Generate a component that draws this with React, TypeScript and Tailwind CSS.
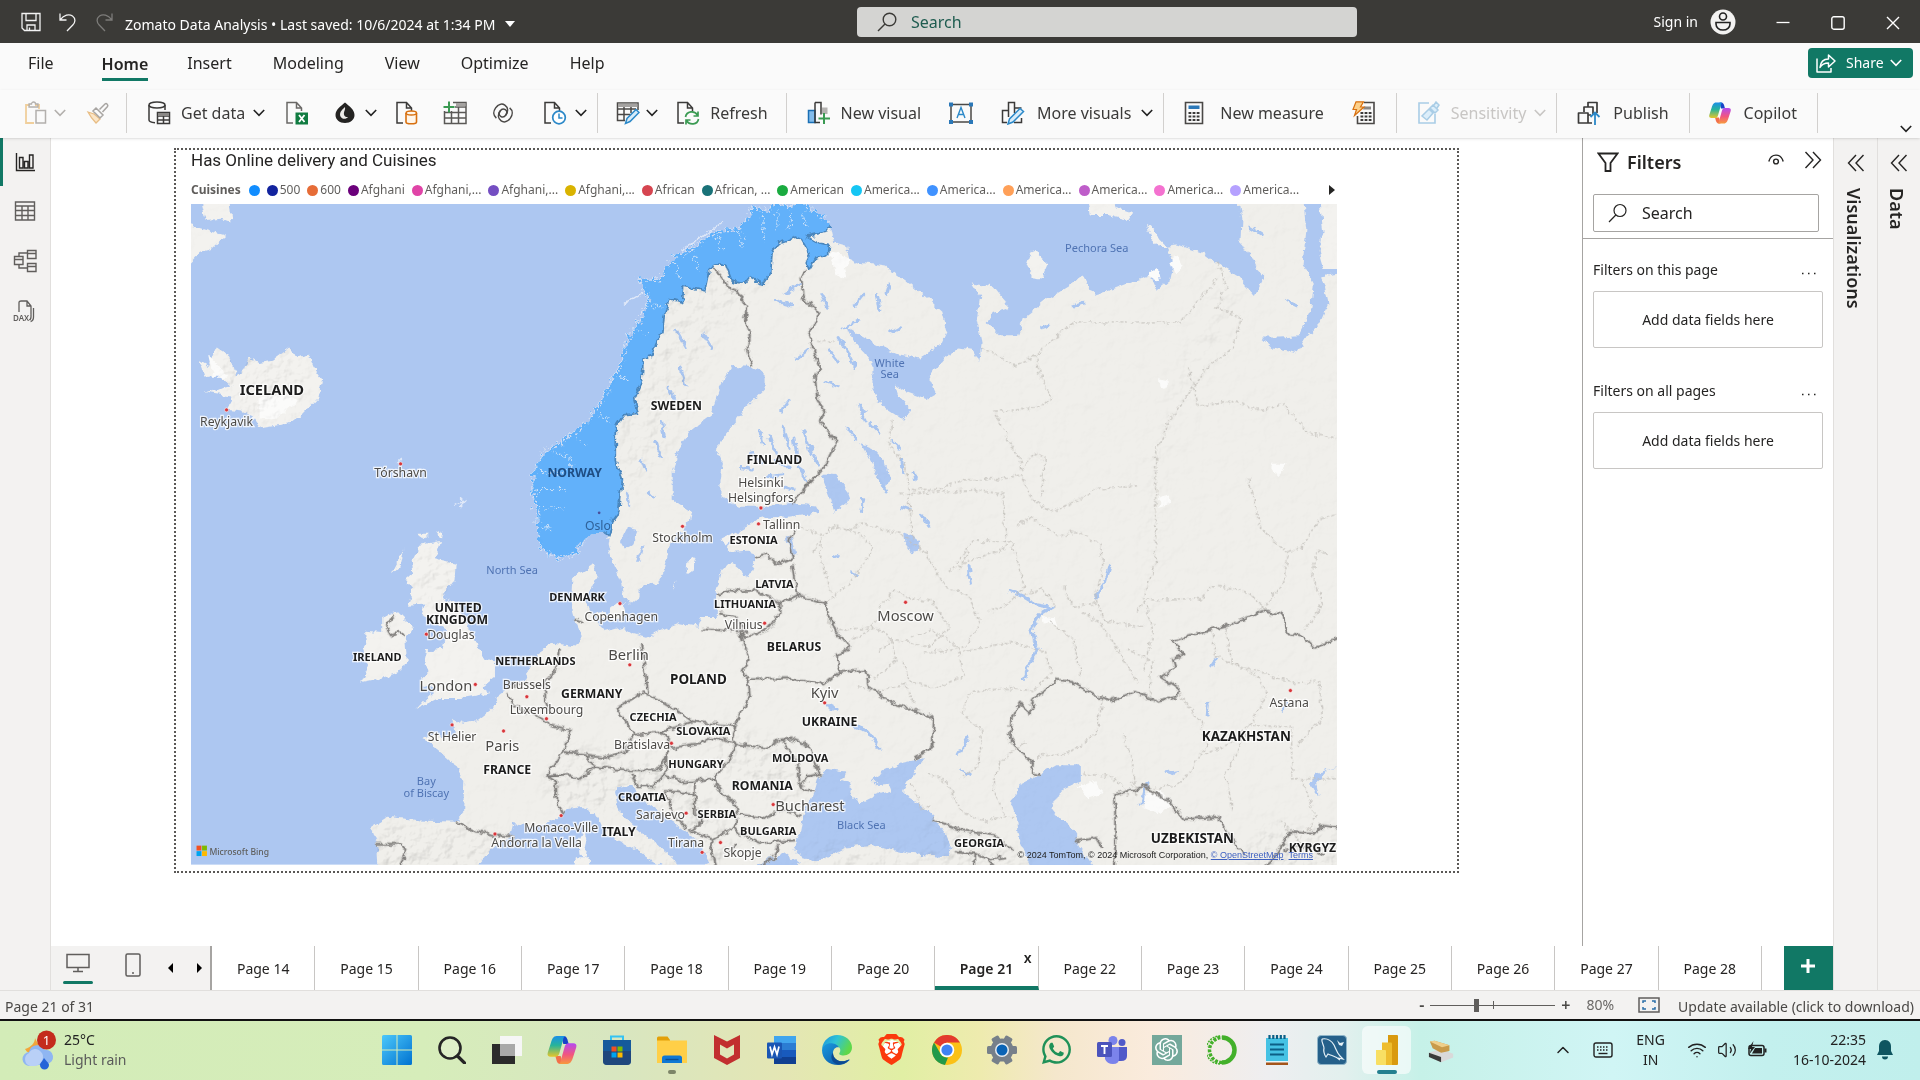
import React from "react";
import { ChevronUp, Wifi, Volume2 } from "lucide-react";
import { SiBrave, SiOpenai } from "react-icons/si";
import { FaWhatsapp } from "react-icons/fa";

type IconProps = { children: React.ReactNode; className?: string; box?: string };

function Ic({ children, className = "h-6 w-6", box = "0 0 24 24" }: IconProps) {
  return (
    <svg viewBox={box} fill="none" className={"shrink-0 " + className} aria-hidden="true">
      {children}
    </svg>
  );
}

function Chev({ className = "" }: { className?: string }) {
  return (
    <svg viewBox="0 0 12 12" fill="none" stroke="currentColor" strokeWidth="1.6" className={"h-3 w-3 shrink-0 " + className} aria-hidden="true">
      <path d="M.8 3l5.2 5.4L11.2 3" />
    </svg>
  );
}

function CopilotMark({ className, id }: { className: string; id: string }) {
  return (
    <svg viewBox="0 0 24 24" className={"shrink-0 " + className} aria-hidden="true">
      <defs>
        <linearGradient id={id + "a"} x1="0" y1="0" x2="0" y2="1">
          <stop offset="0" stopColor="#1b8fe8" />
          <stop offset=".45" stopColor="#27b49a" />
          <stop offset="1" stopColor="#e6c62a" />
        </linearGradient>
        <linearGradient id={id + "b"} x1="0" y1="1" x2="0" y2="0">
          <stop offset="0" stopColor="#f79a3c" />
          <stop offset=".45" stopColor="#f2567e" />
          <stop offset="1" stopColor="#b54af0" />
        </linearGradient>
      </defs>
      <path d="M17 7.5L16 4c-.5-1.6-1.3-2.5-3-2.5h-1.5L13 7.5z" fill="#1843c8" />
      <path d="M7 16.5L8 20c.5 1.600 1.300 2.500 3 2.500h1.500L11 16.500z" fill="#f2704a" />
      <path d="M14 1.500H8C5.500 1.500 4.500 4 3.700 6.500L1.300 14c-.6 2 .5 3 2.200 3H7c1.700 0 2.500-1 3-2.600l2.600-9.100c.5-1.900.6-3.800 2.400-3.800z" fill={`url(#${id}a)`} />
      <path d="M10 22.500h6c2.500 0 3.500-2.500 4.300-5l2.400-7.500c.6-2-.5-3-2.200-3H17c-1.700 0-2.500 1-3 2.600l-2.600 9.100c-.5 1.900-.6 3.800-2.400 3.800z" fill={`url(#${id}b)`} />
    </svg>
  );
}

function TitleBar() {
  return (
    <header className="grid h-[43px] grid-cols-[857fr_500fr_563fr] items-center bg-[#3b3a37] text-sm text-white">
      <div className="flex items-center pl-[21px]">
        <button aria-label="Save" className="block">
          <Ic className="h-5 w-5" box="0 0 20 20">
            <path d="M1 1.500h18v17H3.500L1 16zM5 1.500v7h10v-7M6 18.500v-5.500h8v5.500M8.500 15.500v3" stroke="#f3f3f3" strokeWidth="1.300" />
          </Ic>
        </button>
        <button aria-label="Undo" className="ml-[17px]">
          <Ic className="h-5 w-5" box="0 0 20 20">
            <path d="M2 1.500v6.500h6.500M2.300 7.700C6 3 11 1.500 14.500 4c3.500 2.600 2.800 6.500.3 9L9 19" stroke="#f3f3f3" strokeWidth="1.300" />
          </Ic>
        </button>
        <button aria-label="Redo" className="ml-[17px]">
          <Ic className="h-5 w-5" box="0 0 20 20">
            <path d="M17 1.500v6.500h-6.500M16.700 7.700C13 3 8 1.500 4.500 4 1 6.600 1.700 10.500 4.200 13L10 19" stroke="#7d7c7a" strokeWidth="1.300" />
          </Ic>
        </button>
        <button className="ml-2.5 flex items-center gap-2.5 pt-1.5 whitespace-nowrap">
          <span>Zomato Data Analysis • Last saved: 10/6/2024 at 1:34 PM</span>
          <svg viewBox="0 0 10 6" className="mb-0.5 h-1.5 w-2.5" fill="#fff" aria-hidden="true"><path d="M0 0h10L5 6z" /></svg>
        </button>
      </div>
      <label className="flex h-[30px] items-center rounded-sm bg-[#d4d4d2]">
        <Ic className="ml-5 h-5 w-5" box="0 0 20 20">
          <circle cx="12.500" cy="7.500" r="6.300" stroke="#3b3a37" strokeWidth="1.400" />
          <path d="M8 12l-7 7" stroke="#3b3a37" strokeWidth="1.400" />
        </Ic>
        <input aria-label="Search" placeholder="Search" className="ml-3.5 w-full bg-transparent text-base text-[#1f5c50] outline-none placeholder:text-[#1f5c50]" />
      </label>
      <div className="flex items-center justify-end">
        <button className="flex items-center gap-3">
          Sign in
          <Ic className="h-[26px] w-[26px]" box="0 0 26 26">
            <circle cx="13" cy="13" r="12.500" fill="#f3f2f1" />
            <circle cx="13" cy="7.500" r="3.500" stroke="#222" strokeWidth="1.600" />
            <path d="M6 13.500h14v1.500c0 3.500-3 6-7 6s-7-2.500-7-6z" stroke="#222" strokeWidth="1.600" />
          </Ic>
        </button>
        <button aria-label="Minimize" className="ml-10"><Ic className="h-3.5 w-3.5" box="0 0 14 14"><path d="M.5 7.500h13" stroke="#fff" strokeWidth="1.300" /></Ic></button>
        <button aria-label="Maximize" className="ml-[41px]"><Ic className="mt-0.5 h-3.5 w-3.5" box="0 0 14 14"><rect x=".8" y=".8" width="12.400" height="12.400" rx="2" stroke="#fff" strokeWidth="1.400" /></Ic></button>
        <button aria-label="Close" className="mr-5 ml-[41px]"><Ic className="mt-0.5 h-3.5 w-3.5" box="0 0 14 14"><path d="M1 1l12 12M13 1L1 13" stroke="#fff" strokeWidth="1.400" /></Ic></button>
      </div>
    </header>
  );
}

function MenuBar() {
  const tabs = ["Insert", "Modeling", "View", "Optimize", "Help"];
  return (
    <nav className="flex h-[47px] items-center bg-[#fafafa] pl-7 text-base text-[#252423]">
      <button className="mr-12 pb-2">File</button>
      <button className="border-b-3 border-[#117865] pb-0.5 font-semibold">Home</button>
      <div className="ml-[39px] flex gap-[41px] pb-2">
        {tabs.map((t) => (
          <button key={t}>{t}</button>
        ))}
      </div>
      <button className="mt-[5px] mr-[7px] ml-auto flex h-[30px] w-[105px] items-center self-start rounded bg-[#117865] pl-2 text-sm text-white">
        <Ic className="h-5 w-5" box="0 0 20 20">
          <path d="M1 5.500V19h14v-4M12.500 2v4C7.500 6 4.500 9 4 14.500c2-3.500 4.500-4.500 8.500-4.500v4L19 8z" stroke="#fff" strokeWidth="1.500" strokeLinejoin="round" />
        </Ic>
        <span className="ml-2.5">Share</span>
        <Chev className="ml-1.5" />
      </button>
    </nav>
  );
}

const doc = "M8 22H2V1.500h9.500L16.500 7v3M11.500 1.500V7h5";

function Group({ children, className }: { children: React.ReactNode; className: string }) {
  return <div className={"flex h-10 items-center border-r border-[#d2d0ce] " + className}>{children}</div>;
}

function Ribbon() {
  return (
    <div className="relative z-10 flex h-12 items-center bg-[#fafafa] pb-0.5 text-base whitespace-nowrap text-[#3b3a39] shadow-sm">
      <Group className="pr-4 pl-6">
        <button aria-label="Paste" className="flex items-center text-[#b3b0ad]">
          <Ic>
            <path d="M6 4H2v18h8M15 8V4h-4" stroke="#f0cf9c" strokeWidth="1.800" />
            <path d="M5 6V3h2.500a2 2 0 014 0H14v3z" stroke="#b3b0ad" strokeWidth="1.300" />
            <path d="M12 9.500h9.500V22H12z" stroke="#b3b0ad" strokeWidth="1.500" />
          </Ic>
          <Chev className="ml-1.5" />
        </button>
        <button aria-label="Format painter" className="ml-5">
          <Ic>
            <path d="M2 11l6 2 6 5-4 4C7 19 4 15 2 11z" fill="#fbe6c8" stroke="#e8bd84" strokeWidth="1.300" />
            <path d="M10 7l7 7-3 3L7 10zM13.500 8.500L19 3c1.500-1.200 3.500.8 2.500 2.500L16.500 11" stroke="#a8a5a2" strokeWidth="1.500" />
          </Ic>
        </button>
      </Group>
      <Group className="pr-2.5 pl-5">
        <button className="flex items-center">
          <Ic>
            <ellipse cx="10" cy="4" rx="8" ry="3" stroke="#3b3a39" strokeWidth="1.500" />
            <path d="M2 4v15c0 1.500 3 2.500 6 2.800M18 4v5" stroke="#3b3a39" strokeWidth="1.500" />
            <path d="M10.500 11.500h12v11h-12zM10.500 15h12M10.500 19h12M16.500 15v7.500" stroke="#3b3a39" strokeWidth="1.500" />
            <path d="M11 12h11v3H11z" fill="#8a8886" />
          </Ic>
          <span className="ml-2.5">Get data</span>
          <Chev className="ml-2 text-[#222]" />
        </button>
        <button aria-label="Excel workbook" className="ml-5">
          <Ic>
            <path d={doc} stroke="#6a6866" strokeWidth="1.500" />
            <path d="M10.500 11.500h12.500v12H10.500z" fill="#107c41" />
            <path d="M14 14l5.500 7M19.500 14L14 21" stroke="#fff" strokeWidth="1.800" />
          </Ic>
        </button>
        <button aria-label="OneLake data hub" className="ml-6 flex items-center">
          <Ic>
            <path d="M12 1.500c4 3.500 9.500 7 9.500 12.500 0 4.500-4 8-9.500 8s-9.500-3.500-9.500-8C2.500 8.500 8 5 12 1.500z" fill="#242322" />
            <path d="M12 6c-3.500 3-6 6-4.500 9.500 2 3.500 6 2.500 7.500.5-3 .5-4.500-2-4-4.500.3-2 1.500-3 1-5.500z" fill="#eceae8" />
          </Ic>
          <Chev className="ml-2 text-[#222]" />
        </button>
        <button aria-label="SQL Server" className="ml-4.5">
          <Ic>
            <path d={doc} stroke="#3b3a39" strokeWidth="1.500" />
            <path d="M11 12v9c0 2.400 10.500 2.400 10.500 0v-9" fill="#fff6ea" stroke="#d8700f" strokeWidth="1.600" />
            <ellipse cx="16.300" cy="12" rx="5.200" ry="2" fill="#fff6ea" stroke="#d8700f" strokeWidth="1.500" />
          </Ic>
        </button>
        <button aria-label="Enter data" className="ml-6">
          <Ic>
            <path d="M10 1.500h13v21H1.500V10M1.500 11.500H23M1.500 17H23M8.500 10v12.500M15.500 6v16.500M12 6h11" stroke="#5a5856" strokeWidth="1.500" />
            <path d="M13 2h9.500v3.500H13z" fill="#a5a3a1" />
            <path d="M6 .5v11M.5 6h11" stroke="#3a9a52" strokeWidth="2" />
          </Ic>
        </button>
        <button aria-label="Dataverse" className="ml-6">
          <Ic>
            <g transform="rotate(35 12 12)" stroke="#4a4846" strokeWidth="1.500">
              <path d="M12 8c2.500 0 3.500 1.800 3.500 4s-1 4-3.500 4-3.500-1.800-3.500-4 1-4 3.500-4z" />
              <path d="M8.500 12c0 5 3 7.500 6.500 7.500s6-3 6-7.500-2.500-7.800-6.500-8M15.500 12c0-5-3-7.500-6.500-7.500S3 7.500 3 12s2.500 7.800 6.500 8" />
            </g>
          </Ic>
        </button>
        <button aria-label="Recent sources" className="ml-7 flex items-center">
          <Ic>
            <path d={doc} stroke="#3b3a39" strokeWidth="1.500" />
            <circle cx="16" cy="16.500" r="6.300" fill="#fff" stroke="#2b88c8" strokeWidth="1.700" />
            <path d="M16 12.500v4.500h3.500" stroke="#2b88c8" strokeWidth="1.500" />
          </Ic>
          <Chev className="ml-2 text-[#222]" />
        </button>
      </Group>
      <Group className="pr-4.5 pl-4.5">
        <button aria-label="Transform data" className="flex items-center">
          <Ic>
            <path d="M9 19.500H1.500V2H22v7M1.500 8H20M1.500 13.500h13M8 6v13M15 6v6" stroke="#4a4846" strokeWidth="1.500" />
            <path d="M2 2.500h19.500V6H2z" fill="#a5a3a1" />
            <path d="M9.500 22.500l1.500-5L20 8.500l3 3-9 9z" fill="#d8ecfa" stroke="#2b88c8" strokeWidth="1.500" />
          </Ic>
          <Chev className="ml-1.5 text-[#222]" />
        </button>
        <button className="ml-4.5 flex items-center">
          <Ic>
            <path d={doc} stroke="#3b3a39" strokeWidth="1.500" />
            <path d="M9.500 16c1-6 9-7 12-2M22 10.500V15h-4.500M22.500 18c-1 6-9 6.500-12 1.500M10 23.500V19h4.500" stroke="#3a9a52" strokeWidth="1.700" />
          </Ic>
          <span className="ml-2.5">Refresh</span>
        </button>
      </Group>
      <Group className="pr-2.5 pl-5">
        <button className="flex items-center">
          <Ic>
            <path d="M1.500 9.500H8v12H1.500z" fill="#83bdec" stroke="#1a6fb5" strokeWidth="1.500" />
            <path d="M15 6.500h5.500V13H15z" fill="#b5b3b1" />
            <path d="M8 1.500h6v12M8 1.500v20h5" stroke="#3b3a39" strokeWidth="1.500" />
            <path d="M17 12v11M11.500 17.500h11.500" stroke="#3a9a52" strokeWidth="2" />
          </Ic>
          <span className="ml-2.5">New visual</span>
        </button>
        <button aria-label="Text box" className="ml-7">
          <Ic>
            <path d="M2 3.500h20v17.500H2z" stroke="#4a4846" strokeWidth="1.500" />
            <path d="M8 17l4-10.500L16 17M9.500 13.500h5" stroke="#2b88c8" strokeWidth="1.400" />
            <path d="M0 1.500h4v4H0zM20 1.500h4v4h-4zM0 19h4v4H0zM20 19h4v4h-4z" fill="#2b78b8" />
          </Ic>
        </button>
        <button className="ml-7 flex items-center">
          <Ic>
            <path d="M6 21.500H1.500V9.500h6M7.500 16V1.500h6V12M14 7h6.500M20.500 17v4.500H13" stroke="#3b3a39" strokeWidth="1.500" />
            <path d="M7 23l1.500-5L19 7.500l3.500 3L12 21z" fill="#d8ecfa" stroke="#2b88c8" strokeWidth="1.500" />
          </Ic>
          <span className="ml-3">More visuals</span>
          <Chev className="ml-2.5 text-[#222]" />
        </button>
      </Group>
      <Group className="pr-5 pl-4.5">
        <button className="flex items-center">
          <Ic>
            <path d="M3.500 1.500h17v21h-17z" stroke="#4a4846" strokeWidth="1.600" />
            <path d="M6.500 4.500h11V8h-11z" fill="#2b78b8" />
            <path d="M6.500 12h11M6.500 15.500h11M6.500 19h11" stroke="#3b3a39" strokeWidth="2.200" strokeDasharray="2.800 1.300" />
          </Ic>
          <span className="ml-3.5">New measure</span>
        </button>
        <button aria-label="Quick measure" className="ml-7">
          <Ic>
            <path d="M12 1.500h10v21H5.500V15" stroke="#4a4846" strokeWidth="1.600" />
            <path d="M12 5.500h7v3h-8z" fill="#8a8886" />
            <path d="M8.500 12h11M8.500 15.500h11M8.500 19h11" stroke="#3b3a39" strokeWidth="2.200" strokeDasharray="2.800 1.300" />
            <path d="M4 .8h7.500L8.500 6H12L2.500 14.500l2-6H1z" fill="#fcd08a" stroke="#d8700f" strokeWidth="1.200" />
          </Ic>
        </button>
      </Group>
      <Group className="pr-2.5 pl-5">
        <button disabled className="flex items-center text-[#c8c6c4]">
          <Ic>
            <path d="M12 2H2v20h16v-9" stroke="#a9cde6" strokeWidth="1.600" />
            <path d="M12 8l4 4-6 7-5-4zM13 7l3-3 5 5-3 3zM17 4l2-3 3 3-2 3" fill="#dceefa" stroke="#a9cde6" strokeWidth="1.500" />
          </Ic>
          <span className="ml-2.5">Sensitivity</span>
          <Chev className="ml-2" />
        </button>
      </Group>
      <Group className="px-5">
        <button className="flex items-center">
          <Ic>
            <path d="M7 11V6h9v7M11 6V1.500h9V12M1.500 12H11v10H1.500zM11 22h4M11 14h3" stroke="#3b3a39" strokeWidth="1.700" strokeLinejoin="round" />
            <path d="M18 24V12M13.500 16L18 11.500l4.500 4.500" stroke="#2b88c8" strokeWidth="1.800" />
          </Ic>
          <span className="ml-3">Publish</span>
        </button>
      </Group>
      <Group className="pr-5 pl-4.5">
        <button className="flex items-center">
          <CopilotMark className="h-6 w-6" id="ribbonCopilot" />
          <span className="ml-3">Copilot</span>
        </button>
      </Group>
      <button aria-label="Collapse ribbon" className="mt-8 mr-2 ml-auto text-[#222]"><Chev /></button>
    </div>
  );
}

function Rail() {
  return (
    <aside className="flex w-[51px] shrink-0 flex-col items-center border-r border-[#e1dfdd] bg-[#f3f2f1]">
      <button aria-label="Report view" className="flex h-12 w-full items-center border-l-3 border-[#117865] pl-3">
        <Ic className="h-5 w-5" box="0 0 20 20">
          <path d="M1.500 1v17.500H20M4.500 16V5.500H8V16zM9.500 16V9.500H13V16zM14.500 16V3H18v13z" stroke="#252423" strokeWidth="1.400" />
        </Ic>
      </button>
      <button aria-label="Table view" className="flex h-[50px] items-center">
        <Ic className="h-[22px] w-[22px]" box="0 0 22 22">
          <path d="M1.500 2h19v18h-19zM1.500 6h19M1.500 10.500h19M1.500 15.500h19M8 6v14M14 6v14" stroke="#605e5c" strokeWidth="1.400" />
        </Ic>
      </button>
      <button aria-label="Model view" className="flex h-[50px] items-center">
        <Ic>
          <path d="M14.500 1.500h8.500v8h-8.500zM14.500 4.500H23M14.500 14.500h8.500v8h-8.500zM14.500 17.500H23M1.500 7.500H10v8H1.500zM1.500 10.500H10M6 7.500V4h8.500M6 15.500V19h8.500" stroke="#605e5c" strokeWidth="1.400" />
        </Ic>
      </button>
      <button aria-label="DAX query view" className="flex h-[50px] items-center">
        <Ic>
          <path d="M6 13V3.500C6 2.500 7 2 8 2h6l4 5v11c0 2-1 3-2.500 3M14 2v5h4M20.500 9v9c0 2-1 4-3 4.500" stroke="#605e5c" strokeWidth="1.300" />
          <text x="0" y="22" fontSize="8" fontWeight="600" fill="#605e5c" stroke="#f3f2f1" strokeWidth="1.500" paintOrder="stroke" fontFamily="Noto Sans">DAX</text>
        </Ic>
      </button>
    </aside>
  );
}

const legend: [string, string][] = [
  ["#118dff", ""],
  ["#12239e", "500"],
  ["#e66c37", "600"],
  ["#6b007b", "Afghani"],
  ["#e044a7", "Afghani,..."],
  ["#744ec2", "Afghani,..."],
  ["#d9b300", "Afghani,..."],
  ["#d64550", "African"],
  ["#197278", "African, ..."],
  ["#1aab40", "American"],
  ["#15c6f4", "America..."],
  ["#4092ff", "America..."],
  ["#ffa058", "America..."],
  ["#be5dc9", "America..."],
  ["#f472d0", "America..."],
  ["#b5a1ff", "America..."],
];

const norwayCoast =
  "476,441 467,452 458,454 445,449 441,438 440,419 437,403 437,389 443,373 460,362 481,346 495,324 509,297 515,275 528,258 531,242 524,230 539,231 548,215 571,201 588,190 602,190 610,182 615,172 628,175 634,168 645,172 652,166 663,174 677,185";
const norwayBorder =
  "677,185 674,190 659,193 669,199 677,201 676,208 666,211 660,221 658,215 661,208 654,196 649,194 635,199 630,207 629,223 622,233 612,227 608,232 597,230 592,216 583,216 579,223 576,238 558,234 557,248 546,245 542,258 541,272 536,278 533,291 525,293 524,310 518,325 521,338 509,339 503,348 503,378 508,392 506,404 505,418 500,425 497,438 491,433";

const mainland =
  norwayCoast +
  " 680,198 691,201 694,212 702,215 723,218 741,231 758,245 769,255 773,270 767,283 751,293 730,289 712,280 691,268 698,280 712,297 712,318 720,332 737,343 744,335 733,324 730,314 741,321 755,326 764,321 758,308 769,294 783,284 794,286 799,297 801,280 797,261 800,242 793,231 810,234 820,246 822,252 810,256 806,264 815,274 831,274 836,259 854,245 872,234 884,226 893,241 907,237 928,229 939,226 944,238 955,229 958,215 951,201 960,200 982,207 992,215 1010,226 1024,242 1032,226 1026,220 1020,207 1012,203 1013,180 1010,160 1063,160 1066,188 1063,215 1072,231 1070,253 1059,275 1045,276 1029,276 1038,284 1059,288 1067,275 1077,264 1084,248 1081,234 1077,226 1099,223 1099,712 560,712 579,705 571,689 561,680 540,664 521,651 518,644 514,641 503,643 502,648 506,664 521,678 549,700 556,712 537,706 515,691 494,681 488,667 476,659 461,661 456,668 437,675 419,672 416,684 400,694 386,712 309,712 308,690 303,675 316,667 343,670 373,671 378,664 379,637 370,623 358,612 345,603 355,599 372,602 369,587 378,591 390,588 404,577 407,568 414,562 428,555 431,547 441,532 452,525 470,528 475,520 469,506 466,496 467,474 473,468 484,461 487,471 482,482 478,490 482,501 488,509 494,516 509,512 517,517 528,520 555,509 570,512 573,504 585,504 585,496 584,482 589,465 597,459 604,465 608,471 614,467 616,457 611,450 594,451 597,437 612,429 621,422 643,423 669,419 666,413 646,411 623,414 603,414 588,405 588,392 590,378 585,367 592,354 610,332 624,318 624,305 613,300 597,299 588,316 581,338 564,351 553,367 549,387 549,408 564,418 562,426 549,441 546,447 543,463 537,476 522,479 522,487 514,494 509,487 508,476 500,460 496,444 497,438 491,433";

const islands = [
  "336,459 343,445 360,442 355,456 372,460 371,474 361,488 374,493 380,509 390,525 393,536 404,540 404,553 394,561 401,566 377,570 358,570 340,579 348,570 356,563 342,558 349,550 346,539 348,531 361,530 365,514 358,509 344,503 348,493 333,494 337,482 331,474 338,468",
  "312,504 325,500 337,512 331,523 332,539 328,548 310,554 295,557 301,544 295,533 299,527 298,516 312,517",
  "163,296 170,300 172,294 177,284 186,290 190,298 193,308 199,302 203,292 210,296 223,294 237,284 243,292 252,290 256,300 263,310 260,324 247,338 236,346 213,350 206,340 196,336 186,335 189,324 167,321 189,316 178,306 167,308",
  "150,183 168,188 184,193 172,204 164,206 150,220",
  "163,160 187,160 189,182 180,179 168,180",
  "888,160 905,160 912,170 924,174 920,180 904,176 890,176",
  "842,205 847,208 855,216 850,227 842,226 838,217",
  "936,184 941,188 947,197 952,202 946,202 939,196",
  "497,497 509,492 510,500 505,506 497,504",
  "486,500 493,499 492,506 486,505",
  "561,460 567,456 564,467 560,470",
  "549,483 552,473 551,480",
  "594,437 600,441 592,445 588,440",
  "472,688 477,678 479,688 477,700 473,697",
  "468,712 470,700 480,700 482,712",
  "319,470 330,448 327,462 320,468",
  "340,436 350,436 346,441",
  "357,435 361,433 360,439",
  "1077,167 1099,167 1099,220 1080,220 1076,206 1080,190",
];

const seas = [
  "668,634 676,628 690,630 686,637 695,640 692,646 702,656 714,650 728,645 726,640 716,641 711,636 722,629 735,623 754,619 746,630 738,643 737,648 750,656 761,667 772,681 776,692 772,700 740,697 712,690 690,692 672,702 656,703 648,692 653,680 655,668 664,648",
  "848,633 862,625 882,625 882,637 866,645 858,660 866,670 879,681 879,689 896,712 843,712 832,686 830,670 825,656 832,641",
  "670,389 680,386 691,400 694,408 681,418 675,402",
  "702,362 712,366 723,378 727,395 720,400 713,381",
  "506,443 512,431 521,433 517,444 509,448",
  "519,458 524,446 526,446 522,458",
  "737,434 742,436 750,442 749,450 744,452 738,444",
  "641,438 646,438 650,452 646,454",
  "1099,624 1084,628 1074,640 1076,650 1070,642 1072,632",
  "604,712 640,696 660,712",
  "950,630 962,628 958,634 951,632",
  "700,330 708,336 702,340",
];

const inlandWaters =
  "M824 483l12 5 10 6 12 2-10 6-6 10 2 12 4 6-8 12-4 12M894 488l8-12 4-14M790 462l2 16M676 576l8 4M694 592l14 5 10 14M790 602l-8 14M784 628l8 6M936 640l-4 16M988 544l4-6M985 584l1-8M1046 580l4-6M1020 186l10 6M1050 246l8 4M875 251l8-3M850 268l6-2M735 268l-8 4M640 240l14-8M632 246l14 4M670 240l6 12M698 250l6-8M700 262l-12 6M716 240l2 14M726 232l-2 8M684 276l8 12 6 12M676 286l8 10M674 312l10 4M660 286l-10 8M644 328l-6 8M620 352l3 12M628 356l5 14M640 350l4 16M648 358l3 20M656 352l6 18M612 370l10 8M634 376l10 6M652 382l6 10M664 372l4 8M606 382l8 2M624 390l14-2M640 398l8 2M692 350l6 8M702 332l4 12M710 346l8 8M736 376l1 10M746 386l1 6M728 360l6 6M520 262l-4 10M555 300l5 16M546 318l4 8M540 346l2 10M536 362l3 10M552 270l8 14M524 376l3 8M574 274l6 10M512 402l2 12M530 402l4 4M704 408l-2 10M752 420l6 10M736 414l6 2M718 392l6 10M680 455l4-2M694 466l4 4";

const borders = [
  "M583 220l11 14 10 6 5 11-1 10 4 14-2 11 4 13",
  "M658 222l-4 4 1 16 13 14-8 18 10 28-5 6 2 19 6 9-4 8 14 17-11 22-16 17M662 392l-16 20",
  "M649 433l-5 8 3 15M616 456l9-3 10 8 12-5M647 461l4 25-14 7-20-11-13 1-10-1-9 4",
  "M637 493v8l-10 13-19 8-4-6M587 501l13 3 9 12-36-2",
  "M651 486l23 7 8 23 12 13-12 6 3 14-13 10-29-5-31 0",
  "M604 516l7 23-5 9 5 9 1 12-8 14-4 10-18-2-17-2-13-9-12-7-15-7-22 12 15 22 23-3 13-4 12-4",
  "M523 525l3 19 3 22M547 611l23-4 12-5 20 6M540 597l7 10v4M600 593l-3 11 7 4 20 3 14-7 8-1 15 7 8 22-10 2-6 10 11 3M638 604l13 19 2 21",
  "M602 608l-11 18-9 10-24 3-15-7v-14l4-7M449 592l17 4-6 18-11 15-3 5 18-1 9 3 12-10-7-10-18-2",
  "M485 626l24 3 28 0 6-11M478 617l16 2 15-5 8-14M446 634l8 4v15l6 11",
  "M413 566l7 11 17 6 12 9M457 531l-3 16-9 11v14l4 11M416 561l14-3 14 2",
  "M373 671l15 8 16 3 15 1M307 689h21l3 5-6 18M322 503l-7 9 4 7 6-3 6 4M469 506l8 2",
  "M604 665l20 3 16-7 14 5M582 636l9 13 9 8 2 9-2 9 6 8 16 6 14-2 13-1M636 690l-6 12-14 8",
  "M567 638v26l8 6-11 8 18 8-2 8 5 18M567 648l-24-2 6 18 12 14M515 631l5 11h14l9-11M600 675l-18 11M600 690l-6 6",
  "M685 549l21-2 3 14 18 13 19 6 16 7-1 23-16 11",
  "M848 633l-6-2 1-8-13-12-6-8 1-15 7-14 9 8 2-10 19-17 13 2 19 11 13 4 19-7 20 8 14-4 1-7-14-9 12-8-2-7 8-3-8-12 44-12 29-12 16 3 5 16 13 2 9 9 25-10",
  "M910 712v-63l24-7 21 13 11 14 27-2 13 19 8 12M877 687l18-3 5 8M1027 712l10-8 16-25 19 2 7-7 20 3M1048 694l18-4 14 8",
  "M761 669l24 9 26 4 16 12M779 695l16 2 12 5 14-2M795 697v15M807 702l8 10",
];

const regions = [
  "M801 284l28 15 16-9 30-26h88l30-36M845 290l5 20 9 16-13 8-34 2 14 30 6 8 2 10 10-14 8 4-2 32",
  "M993 215l8 20-8 16 20 8-6 24-20 16-30 40-14 30v90l-10 30 8 24-8 36",
  "M970 300l8 32 30-4 20 8 20-6 20 24 23 4",
  "M729 344l-4 20 14 16 6 60M745 400h20l20-8h30l18-4 10 20 16 10 14-6 20-12 34-4",
  "M735 404l60-4 24 4 2 44-30 10-16 8M690 434l14-6 30 8 20 14M649 430l20 6 2 24 8 24",
  "M664 450l14-20 24 6 10 12-18 28-20 16 4 24 32-4 10-10",
  "M780 460l14-18h30l6 14 6 24-12 12-18 8M830 430l10-8 24 16 14-4 20 10 2 20-6 24 8 20 30 4",
  "M754 450l18 30 18 6 10 22-12 20-34 6M717 496l14-14 12 6 18 4 14 20-16 16-30-6-12 10",
  "M693 524l20-12 14 8 4 20-16 14-8-2M745 520l16-6 20 14 6 24-24 10-22-6-4-16",
  "M786 532l40-8 26 8 6 18-14 14-24-2-30 4-4 16M788 586l14 10-4 30-14 10",
  "M856 508l20 14 6 30M884 500l14 10 18 26 12 22M927 500l8-10h44l10-12 30 6 20 20",
  "M900 570l-6 30-20 14-28 4M916 600l8 20 2 30M962 566l18 24 4 20-20 30-22 4M984 616l22-10 18-20 10-20-10-16-32-14-4-24",
  "M1001 512l4 30 22 6 28 10 22-2 2 30-22 24M1006 662l-6-30 20-40 34 2v42h37M1062 637l12 30-14 20-16-18",
  "M1019 392l10 40 22 20 10-4 16-24 30-8M1052 450l-6 30-20 20M1083 452l-8-2-4 20 8 24-14 20",
  "M756 632l16 6 12 24 18 8 24-4M744 640l8 20 8-2M836 606l-20 16-6 20 10 24M884 632l24 2 14 16",
  "M667 279h14M790 450l-8 16M868 480l8 16 20-4M836 486l14-6 12 16M920 530l20 10-2 30M700 560l16 6 22-8 8 16",
];

type Label = [string, number, number, number];
const countries: Label[] = [
  ["ICELAND", 222, 323, 12],
  ["SWEDEN", 552, 335, 10],
  ["FINLAND", 632, 379, 10],
  ["ESTONIA", 615, 444, 9],
  ["LATVIA", 632, 480, 9],
  ["LITHUANIA", 608, 497, 9],
  ["DENMARK", 471, 491, 9],
  ["UNITED", 374, 500, 10],
  ["KINGDOM", 373, 510, 10],
  ["IRELAND", 308, 540, 9],
  ["NETHERLANDS", 437, 543, 9],
  ["GERMANY", 483, 570, 10],
  ["POLAND", 570, 559, 11],
  ["BELARUS", 648, 532, 10],
  ["CZECHIA", 533, 589, 9],
  ["SLOVAKIA", 574, 600, 9],
  ["UKRAINE", 677, 593, 10],
  ["FRANCE", 414, 632, 10],
  ["HUNGARY", 568, 627, 9],
  ["MOLDOVA", 653, 622, 9],
  ["ROMANIA", 622, 645, 10],
  ["CROATIA", 524, 654, 9],
  ["SERBIA", 585, 668, 9],
  ["ITALY", 505, 683, 10],
  ["BULGARIA", 627, 682, 9],
  ["GEORGIA", 799, 692, 9],
  ["KAZAKHSTAN", 1017, 605, 11],
  ["UZBEKISTAN", 973, 688, 11],
  ["KYRGYZ", 1071, 696, 10],
];

// name, label centre x, baseline y, size, then the marker's own position
const cities: [string, number, number, number, number, number][] = [
  ["Reykjavik", 185, 348, 10, 185, 335],
  ["Tórshavn", 327, 390, 10, 327, 379],
  ["Stockholm", 557, 443, 10, 557, 430],
  ["Helsinki", 621, 398, 10, 621, 415],
  ["Helsingfors", 621, 410, 10, 621, 415],
  ["Tallinn", 638, 432, 10, 619, 428],
  ["Copenhagen", 507, 507, 10, 506, 493],
  ["Vilnius", 607, 514, 10, 624, 509],
  ["Douglas", 368, 522, 10, 348, 518],
  ["Berlin", 513, 539, 12, 514, 543],
  ["London", 364, 564, 12, 388, 559],
  ["Brussels", 430, 563, 10, 430, 569],
  ["Luxembourg", 446, 583, 10, 446, 587],
  ["St Helier", 369, 605, 10, 369, 592],
  ["Paris", 410, 613, 12, 411, 597],
  ["Bratislava", 524, 612, 10, 548, 607],
  ["Kyiv", 673, 570, 12, 673, 574],
  ["Moscow", 739, 507, 12, 739, 492],
  ["Bucharest", 661, 662, 12, 631, 657],
  ["Sarajevo", 539, 669, 10, 560, 664],
  ["Monaco-Ville", 458, 679, 10, 458, 666],
  ["Andorra la Vella", 438, 692, 10, 404, 681],
  ["Tirana", 560, 692, 10, 573, 696],
  ["Skopje", 606, 700, 10, 588, 688],
  ["Astana", 1052, 577, 10, 1053, 564],
];

const waters: Label[] = [
  ["Pechora Sea", 895, 206, 9],
  ["White", 726, 300, 9],
  ["Sea", 726, 309, 9],
  ["North Sea", 418, 469, 9],
  ["Bay", 348, 641, 9],
  ["of Biscay", 348, 651, 9],
  ["Black Sea", 703, 677, 9],
];

function EuropeMap() {
  return (
    <svg viewBox="156 167 935 539" className="block w-full" role="img" aria-label="Map of Europe with Norway highlighted" fontFamily="Noto Sans, sans-serif" textAnchor="middle">
      <defs>
        <filter id="coast" filterUnits="userSpaceOnUse" x="146" y="157" width="955" height="559">
          <feTurbulence type="fractalNoise" baseFrequency="0.16" numOctaves="3" seed="4" />
          <feDisplacementMap in="SourceGraphic" scale="6" xChannelSelector="R" yChannelSelector="G" />
        </filter>
        <filter id="fjords" filterUnits="userSpaceOnUse" x="420" y="157" width="280" height="310">
          <feTurbulence type="fractalNoise" baseFrequency="0.28" numOctaves="3" seed="9" />
          <feDisplacementMap in="SourceGraphic" scale="11" xChannelSelector="R" yChannelSelector="G" />
        </filter>
        <filter id="relief" filterUnits="userSpaceOnUse" x="146" y="157" width="955" height="559">
          <feTurbulence type="fractalNoise" baseFrequency="0.09" numOctaves="4" seed="2" result="n" />
          <feDiffuseLighting in="n" surfaceScale="2" lightingColor="#ffffff" diffuseConstant="1.150" result="l"><feDistantLight azimuth="225" elevation="60" /></feDiffuseLighting>
          <feComposite in="l" in2="SourceAlpha" operator="in" />
        </filter>
        <filter id="soft"><feGaussianBlur stdDeviation="7" /></filter>
        <clipPath id="landClip">
          <polygon points={mainland} />
          {islands.map((p) => <polygon key={p} points={p} />)}
        </clipPath>
        <mask id="mountains">
          <rect x="146" y="157" width="955" height="559" fill="#141414" />
          <g fill="#8c8c8c" filter="url(#soft)">
            <path d="M505 300l40-70 70-30 20 20-50 50-30 80-45 60z" fill="#6a6a6a" />
            <path d="M442 640l30-30 60 8 30 20-40 20-60 4zM540 640l40 10 30 60h-40zM590 590l40 20 30 30-20 20-30-20-30-20zM310 670l100 10-20 40H300z" fill="#a8a8a8" />
            <path d="M670 690l110 12v14H650zM760 670l80 30-10 16h-70zM490 670l60 30-10 12zM335 450l40 10-10 40-20-4zM170 290l80 0 0 50-50 0zM1030 670l70 10v36h-90z" />
            <path d="M985 210l26 40-40 70-24 60 0 120-10 0 0-120 26-80 30-50z" fill="#4c4c4c" />
          </g>
        </mask>
      </defs>
      <rect x="156" y="167" width="935" height="539" fill="#adc7f1" />
      <g filter="url(#coast)">
        <polygon points={mainland} fill="#f0efeb" />
        {islands.map((p) => <polygon key={p} points={p} fill="#f3f2ef" />)}
        {seas.map((p) => <polygon key={p} points={p} fill="#adc7f1" />)}
        <path d={inlandWaters} fill="none" stroke="#a9c5f0" strokeWidth="2.400" strokeLinecap="round" />
        <g fill="#fbfbfa">
          <path d="M676 206l10 2 8 4-6 8 2 8-8-4-2-10zM946 310l8 2-4 6-4-2zM1037 379l12 0-2 6-4 4zM946 406l8-2 0 8-8 2zM850 503l10 2 2 6-10-2z" />
          <path d="M880 642l14-4 6 10-12 4zM934 650l12-6 12 14-14 6-10-4zM212 325l20-4 12 6-16 14-16 2zM170 290l8 8 8 10-12 0z" />
          <path d="M955 215l6-6 4 8-6 8zM936 226l8-6 2 10z" />
        </g>
      </g>
      <g clipPath="url(#landClip)" className="mix-blend-multiply">
        <g mask="url(#mountains)"><rect x="146" y="157" width="955" height="559" filter="url(#relief)" /></g>
      </g>
      <g filter="url(#coast)" fill="none">
        {regions.map((d) => <path key={d} d={d} stroke="#c3c0bb" strokeWidth="1" strokeDasharray="2.500 1.800" />)}
        {borders.map((d) => <path key={d} d={d} stroke="#bdbbb8" strokeWidth="2.600" opacity=".6" />)}
        {borders.map((d) => <path key={d} d={d} stroke="#7e7c7a" strokeWidth="1.300" strokeLinejoin="round" />)}
      </g>
      <g filter="url(#fjords)" fill="none">
        <polyline points={norwayCoast} stroke="#dbe5f5" strokeWidth="5" opacity=".75" />
        <polyline points={norwayCoast} stroke="#5fb0fa" strokeWidth="3" />
      </g>
      <g filter="url(#coast)">
        <polygon points={norwayCoast + " " + norwayBorder} fill="#62b1fa" />
        <polyline points={norwayBorder} fill="none" stroke="#4a86bd" strokeWidth="1.400" />
      </g>
      <g filter="url(#fjords)" fill="none" stroke="#cfe2f8" strokeWidth=".8">
        <path d="M440 385l16 2 12-6M440 400l20 0M441 418l10-4 8 2M442 430l8 2M452 370l14 4M470 358l8 6M489 338l8 6M505 308l8 2M520 270l8 4M533 250l10 0M552 215l2 14M566 206l4 14M585 192l4 12M604 190l2 10M622 176l2 22M634 172l0 16M646 172l-2 14M655 175l4 12" />
      </g>
      <g fill="none" stroke="#dfe8f8" strokeWidth="1.200" filter="url(#coast)">
        <path d="M510 248l14-8M556 204l20-12M570 196l20-14M521 258l4-6M372 412l8-4M376 406v10M325 378l3-3" />
      </g>
      <g fontWeight="700" fill="#1c1c1c" stroke="#fff" strokeOpacity=".75" strokeWidth="2" paintOrder="stroke">
        {countries.map(([t, x, y, s]) => <text key={t} x={x} y={y} fontSize={s}>{t}</text>)}
      </g>
      <text x="469" y="390" fontSize="10" fontWeight="700" fill="#1f4e84">NORWAY</text>
      <text x="488" y="433" fontSize="10" fill="#2f6199">Oslo</text>
      <circle cx="489" cy="419" r="1.100" fill="#4a4f9a" />
      <g fill="#4c4a47" stroke="#fff" strokeOpacity=".8" strokeWidth="2" paintOrder="stroke">
        {cities.map(([t, x, y, s]) => <text key={t} x={x} y={y} fontSize={s}>{t}</text>)}
      </g>
      {cities.map(([t, , , , x, y]) => <circle key={t} cx={x} cy={y} r="1.600" fill="#d8363a" stroke="#fff" strokeOpacity=".7" strokeWidth=".6" />)}
      <g fill="#4f73b3">
        {waters.map(([t, x, y, s]) => <text key={t} x={x} y={y} fontSize={s}>{t}</text>)}
      </g>
      <path d="M160.500 690.500h4v4h-4z" fill="#f25022" />
      <path d="M165 690.500h4v4h-4z" fill="#7fba00" />
      <path d="M160.500 695h4v4h-4z" fill="#00a4ef" />
      <path d="M165 695h4v4h-4z" fill="#ffb900" />
      <text x="171" y="698" fontSize="7" fontWeight="500" fill="#5f5f5d" textAnchor="start">Microsoft Bing</text>
    </svg>
  );
}

function Canvas() {
  return (
    <section className="min-w-0 flex-1 bg-white pt-[10px]">
      <div className="mx-[123px] border-2 border-dotted border-[#5a5856] pr-[120px] pb-1.5 pl-[15px]">
        <h1 className="h-6 font-[Roboto,sans-serif] text-[17px] leading-5 text-[#252423]">Has Online delivery and Cuisines</h1>
        <div className="flex h-[30px] items-center pt-0.5 text-xs whitespace-nowrap text-[#605e5c]">
          <span className="mr-2 font-bold">Cuisines</span>
          {legend.map(([color, name], i) => (
            <span key={i} className="mr-[7px] flex items-center gap-0.5">
              <span className="h-[11px] w-[11px] rounded-full" style={{ backgroundColor: color }} />
              {name}
            </span>
          ))}
          <button aria-label="Next legend items" className="mr-0.5 ml-auto">
            <svg viewBox="0 0 6 10" className="h-2.5 w-1.5" fill="#252423" aria-hidden="true"><path d="M0 0l6 5-6 5z" /></svg>
          </button>
        </div>
        <div className="relative">
          <EuropeMap />
          <p className="absolute right-6 bottom-0.5 font-['Liberation_Sans'] text-[9px] leading-4 whitespace-nowrap text-[#222]">
            © 2024 TomTom, © 2024 Microsoft Corporation,{" "}
            <a href="#osm" className="text-[#3c5fc0] underline">© OpenStreetMap</a>&nbsp;&nbsp;
            <a href="#terms" className="text-[#3c5fc0] underline">Terms</a>
          </p>
        </div>
      </div>
    </section>
  );
}

function FilterWell({ title }: { title: string }) {
  return (
    <div className="mb-[33px]">
      <div className="flex h-5 items-center justify-between pr-1.5">
        <h3>{title}</h3>
        <button aria-label={"More options for " + title.toLowerCase()}>
          <Ic className="mt-2 h-1 w-4" box="0 0 16 4"><path d="M1 1.500h1.500M7 1.500h1.500M13 1.500h1.500" stroke="#252423" strokeWidth="1.500" /></Ic>
        </button>
      </div>
      <div className="mt-[11px] flex h-[57px] items-center justify-center rounded-xs border border-[#c8c6c4]">Add data fields here</div>
    </div>
  );
}

function DoubleChevron({ left = false }: { left?: boolean }) {
  return (
    <Ic className="h-[18px] w-[18px]" box="0 0 18 18">
      <path d={left ? "M9 1L1.500 9 9 17M16.500 1L9 9l7.500 8" : "M1.500 1L9 9l-7.500 8M9 1l7.500 8L9 17"} stroke="#252423" strokeWidth="1.400" />
    </Ic>
  );
}

function Filters() {
  return (
    <aside className="w-[251px] shrink-0 border-l border-[#a6a4a2] bg-white text-sm text-[#252423]">
      <div className="border-b border-[#a6a4a2] px-2.5 pb-1.5">
        <div className="flex h-14 items-center pb-2">
          <Ic className="ml-1 h-[22px] w-[22px]" box="0 0 22 22"><path d="M1.500 2.500h19L13.500 12v8h-5v-8z" stroke="#252423" strokeWidth="1.800" /></Ic>
          <h2 className="ml-2 text-lg font-semibold">Filters</h2>
          <button aria-label="Show filter pane to readers" className="mr-5 mb-1 ml-auto">
            <Ic className="h-4 w-4" box="0 0 16 16"><path d="M.8 9.500C3 1 13 1 15.200 9.500" stroke="#252423" strokeWidth="1.400" /><circle cx="8" cy="9.500" r="2.400" stroke="#252423" strokeWidth="1.400" /></Ic>
          </button>
          <button aria-label="Collapse filters" className="mr-px mb-1"><DoubleChevron /></button>
        </div>
        <label className="mr-1 flex h-[38px] items-center rounded-xs border border-[#a6a4a2]">
          <Ic className="ml-3.5 h-5 w-5" box="0 0 20 20"><circle cx="12" cy="7.500" r="6" stroke="#252423" strokeWidth="1.200" /><path d="M7.800 12L1 19" stroke="#252423" strokeWidth="1.200" /></Ic>
          <input aria-label="Search filters" placeholder="Search" className="ml-3.5 w-full bg-transparent text-base outline-none placeholder:text-[#252423]" />
        </label>
      </div>
      <div className="px-[10px] pt-[21px]">
        <FilterWell title="Filters on this page" />
        <FilterWell title="Filters on all pages" />
      </div>
    </aside>
  );
}

function SidePane({ title, width }: { title: string; width: string }) {
  return (
    <aside className={"flex shrink-0 flex-col items-center border-l border-[#e1dfdd] bg-[#f3f2f1] pt-4 text-[#252423] " + width}>
      <button aria-label={"Expand " + title}><DoubleChevron left /></button>
      <h2 className="mt-4 pr-1 text-lg leading-5 font-semibold [writing-mode:vertical-rl]">{title}</h2>
    </aside>
  );
}

function PageTabs() {
  const pages = Array.from({ length: 15 }, (_, i) => 14 + i);
  return (
    <nav className="flex h-11 bg-white text-sm text-[#252423]">
      <div className="flex w-[161px] shrink-0 items-center border-r-2 border-[#a6a4a2] bg-[#f3f2f1] pl-3">
        <button aria-label="Desktop layout" className="flex flex-col items-center self-end pb-1.5">
          <Ic className="h-5 w-6" box="0 0 24 20"><path d="M1 1.500h22v13H1zM12 14.500v4M7 18.500h10" stroke="#605e5c" strokeWidth="1.500" /></Ic>
          <span className="mt-2 h-[3px] w-[30px] rounded-full bg-[#117865]" />
        </button>
        <button aria-label="Mobile layout" className="mb-1.5 ml-8">
          <Ic className="h-6 w-4" box="0 0 16 24"><rect x="1" y="1" width="14" height="22" rx="1.500" stroke="#605e5c" strokeWidth="1.500" /><path d="M7 20h2" stroke="#605e5c" strokeWidth="1.500" /></Ic>
        </button>
        <button aria-label="Previous pages" className="ml-[27px]"><svg viewBox="0 0 5 10" className="h-2.5 w-[5px]" aria-hidden="true"><path d="M5 0L0 5l5 5z" /></svg></button>
        <button aria-label="Next pages" className="ml-6"><svg viewBox="0 0 5 10" className="h-2.5 w-[5px]" aria-hidden="true"><path d="M0 0l5 5-5 5z" /></svg></button>
      </div>
      {pages.map((n) => (
        <button
          key={n}
          className={
            "relative flex-1 border-r border-[#c8c6c4] " +
            (n === 21 ? "border-b-4 border-b-[#117865] pt-1.5 font-semibold" : "pt-0.5")
          }
        >
          Page {n}
          {n === 21 && <span className="absolute top-0.5 right-1.5 text-sm">x</span>}
        </button>
      ))}
      <button aria-label="New page" className="ml-[22px] flex w-[49px] shrink-0 items-center justify-center bg-[#117865]">
        <Ic className="mb-1 h-3.5 w-3.5" box="0 0 14 14"><path d="M7 0v14M0 7h14" stroke="#fff" strokeWidth="3" /></Ic>
      </button>
    </nav>
  );
}

function StatusBar() {
  return (
    <footer className="flex h-[29px] items-center border-t border-[#e1dfdd] bg-[#f3f2f1] pt-1 pr-1.5 pl-[5px] text-sm text-[#4a4846]">
      <span>Page 21 of 31</span>
      <div className="mr-[18px] ml-auto flex items-center pb-1">
        <button aria-label="Zoom out" className="mr-1.5 text-base leading-5 font-semibold">-</button>
        <div className="relative flex h-4 w-[125px] items-center">
          <input
            type="range"
            aria-label="Zoom"
            min="10"
            max="200"
            defaultValue="80"
            className="h-px w-full appearance-none bg-[#605e5c] [&::-webkit-slider-thumb]:h-[13px] [&::-webkit-slider-thumb]:w-[5px] [&::-webkit-slider-thumb]:appearance-none [&::-webkit-slider-thumb]:bg-[#605e5c]"
          />
          <span className="pointer-events-none absolute top-1 left-1/2 h-2 w-px bg-[#605e5c]" />
        </div>
        <button aria-label="Zoom in" className="ml-1.5 text-base leading-5 font-semibold">+</button>
        <span className="ml-4 text-[#6a6866]">80%</span>
        <button aria-label="Fit to page" className="ml-6">
          <Ic className="h-4 w-[22px]" box="0 0 22 16"><path d="M1 1h20v14H1z" stroke="#605e5c" strokeWidth="1.500" /><path d="M5 6V4h3M14 4h3v2M17 10v2h-3M8 12H5v-2" stroke="#2b6fa8" strokeWidth="1.500" /></Ic>
        </button>
      </div>
      <button>Update available (click to download)</button>
    </footer>
  );
}

function WeatherIcon() {
  return (
    <svg viewBox="0 0 36 40" className="h-10 w-9 shrink-0" aria-hidden="true">
      <path d="M13 8c0 5-4 9-10 11 3 6 12 7 16 1z" fill="#f2a53a" />
      <path d="M8 36a7 7 0 01-1-14 8.500 8.500 0 0116-2 7 7 0 012 14z" fill="#8fb6f2" />
      <path d="M8 36a7 7 0 01-1-13 7 7 0 0112-1c4 3 2 13-6 14z" fill="#b9d0f7" />
      <path d="M22 28c3 4 5 5 5 7a4.500 4.500 0 01-9 0c0-2 2-3 4-7z" fill="#2563d8" />
      <circle cx="24.500" cy="10" r="9.500" fill="#c42b1c" />
      <text x="24.500" y="14.500" fontSize="13" fill="#fff" textAnchor="middle" fontFamily="Noto Sans">1</text>
    </svg>
  );
}

const taskIcons: { name: string; icon: React.ReactNode; active?: boolean; open?: boolean }[] = [
  {
    name: "Start",
    icon: (
      <Ic className="h-[30px] w-[30px]" box="0 0 30 30">
        <defs><linearGradient id="win" x1="0" y1="0" x2="1" y2="1"><stop stopColor="#4cc8fb" /><stop offset="1" stopColor="#0072d0" /></linearGradient></defs>
        <path d="M0 1.500Q0 0 1.500 0h13v14.500H0zM15.500 0h13Q30 0 30 1.500v13H15.500zM0 15.500h14.500V30h-13Q0 30 0 28.500zM15.500 15.500H30v13q0 1.500-1.500 1.500h-13z" fill="url(#win)" />
      </Ic>
    ),
  },
  {
    name: "Search",
    icon: <Ic className="h-7 w-7" box="0 0 28 28"><circle cx="12" cy="12" r="10.500" stroke="#252525" strokeWidth="2.600" fill="#ffffff33" /><path d="M19.500 20l7 7" stroke="#252525" strokeWidth="3.200" strokeLinecap="round" /></Ic>,
  },
  {
    name: "Task view",
    icon: <Ic className="h-[30px] w-[30px]" box="0 0 30 30"><path d="M0 9h23v20H0z" fill="#2b2b2b" /><path d="M8 1h22v20H8z" fill="#f6f6f6" /><path d="M8 9h15v12H8z" fill="#a9a9a9" /></Ic>,
  },
  { name: "Copilot", icon: <CopilotMark className="h-8 w-8" id="taskCopilot" /> },
  {
    name: "Microsoft Store",
    icon: (
      <Ic className="h-[30px] w-[30px]" box="0 0 30 30">
        <path d="M9 6V1.500h12V6" stroke="#35c3f3" strokeWidth="2" />
        <path d="M1 5h28v21q0 4-4 4H5q-4 0-4-4z" fill="#155a9c" />
        <path d="M1 16h28v10q0 4-4 4H5q-4 0-4-4z" fill="#243f70" opacity=".7" />
        <path d="M9.500 11.500h5v5h-5z" fill="#f25022" /><path d="M15.500 11.500h5v5h-5z" fill="#7fba00" /><path d="M9.500 17.500h5v5h-5z" fill="#00a4ef" /><path d="M15.500 17.500h5v5h-5z" fill="#ffb900" />
      </Ic>
    ),
  },
  {
    name: "File Explorer",
    open: true,
    icon: <Ic className="h-[30px] w-[30px]" box="0 0 30 30"><path d="M0 3q0-1.500 1.500-1.500h9L13 5v6H0z" fill="#e3a008" /><path d="M0 5.500h30V28H0z" fill="#ffcf47" /><path d="M5 28v-5q0-2.500 2.500-2.500h15Q25 20.500 25 23v5z" fill="#0f78d4" /><path d="M8.500 24.500h13" stroke="#0b4f94" strokeWidth="1.400" /></Ic>,
  },
  { name: "McAfee", icon: <Ic className="h-[30px] w-[30px]" box="0 0 30 30"><path d="M2 0l13 6.500L28 0v23l-13 7-13-7zM8 9.500v10l7 4 7-4v-10l-7 4z" fill="#c22f2f" fillRule="evenodd" /></Ic> },
  {
    name: "Word",
    icon: (
      <Ic className="h-[30px] w-[30px]" box="0 0 30 30">
        <path d="M7 1h22v7H7z" fill="#41a5ee" /><path d="M7 8h22v7H7z" fill="#2b7cd3" /><path d="M7 15h22v7H7z" fill="#185abd" /><path d="M7 22h22v7H7z" fill="#103f91" />
        <rect x="0" y="7.500" width="15" height="16" rx="1" fill="#1a56b4" />
        <path d="M3 11.500l2 8 2.500-7.500 2.500 7.500 2-8" stroke="#fff" strokeWidth="1.700" />
      </Ic>
    ),
  },
  {
    name: "Edge",
    icon: (
      <Ic className="h-[30px] w-[30px]" box="0 0 30 30">
        <defs>
          <linearGradient id="edgeA" x1="0" y1="0" x2="1" y2=".4"><stop stopColor="#1b8fdd" /><stop offset=".5" stopColor="#2fc3d6" /><stop offset="1" stopColor="#5fd84a" /></linearGradient>
          <linearGradient id="edgeB" x1="0" y1="0" x2="1" y2="1"><stop stopColor="#1a9ae0" /><stop offset="1" stopColor="#0b4f9e" /></linearGradient>
        </defs>
        <path d="M0 14C1 5 8 0 15 0c9 0 15 6 15 12.500 0 5-4 8-8.500 8-3 0-5-1-4-2.500 2-3 .5-7-5-7.500C7 10 2 12 0 14z" fill="url(#edgeA)" />
        <path d="M0 15c1-5 6-7.500 11-6.500 3 .5 5 2 6 4-3-1-6 1.500-6 5.500 0 6 6 9.500 12 8 1.500-.5 3-1 4-1.500.5 0 .8.300.4.800C24 29 20 30 16 30 7 30 0 24 0 15z" fill="url(#edgeB)" />
        <path d="M11 18c0 6 6 9.500 12 8 1.500-.5 3-1 4-1.500-4 5-11 6.500-15 3-3-2.500-3.500-7-1-9.500z" fill="#0c4a92" />
      </Ic>
    ),
  },
  {
    name: "Brave",
    icon: (
      <span className="flex h-8 w-8 items-center justify-center bg-[radial-gradient(circle,#fff_42%,transparent_43%)]">
        <SiBrave className="h-[31px] w-[31px] text-[#fb3a0d]" />
      </span>
    ),
  },
  {
    name: "Chrome",
    icon: (
      <Ic className="h-[30px] w-[30px]" box="0 0 30 30">
        <circle cx="15" cy="15" r="15" fill="#fbc116" />
        <path d="M2 7.500L8.500 18.700A7.500 7.500 0 0016 22.400L13 29.900A15 15 0 012 7.500z" fill="#229a4a" />
        <path d="M2 7.500A15 15 0 0128 7.500H15l-6.500 4z" fill="#e33b2e" />
        <circle cx="15" cy="15" r="7.300" fill="#fff" /><circle cx="15" cy="15" r="5.600" fill="#3f82f3" />
      </Ic>
    ),
  },
  {
    name: "Settings",
    icon: (
      <Ic className="h-[30px] w-[30px]" box="0 0 30 30">
        <g fill="#77808a">
          <circle cx="15" cy="15" r="11.500" />
          {[30, 90, 150, 210, 270, 330].map((a) => <rect key={a} x="11" y="0" width="8" height="8" rx="1.500" transform={`rotate(${a} 15 15)`} />)}
        </g>
        <circle cx="15" cy="15" r="7" fill="#e8edf2" /><circle cx="15" cy="15" r="5.500" fill="#0a63b5" />
      </Ic>
    ),
  },
  { name: "WhatsApp", icon: <FaWhatsapp className="h-[33px] w-[33px] text-[#1f9158]" /> },
  {
    name: "Teams",
    icon: (
      <Ic className="h-[30px] w-[30px]" box="0 0 30 30">
        <circle cx="25" cy="7.500" r="3.500" fill="#5059c9" /><path d="M20 12h10v9q0 5-6 5h-4z" fill="#5059c9" />
        <circle cx="16" cy="5.500" r="4.500" fill="#7b83eb" /><path d="M8 12h14v12q0 5-6 5t-8-5z" fill="#7b83eb" />
        <rect x="0" y="7" width="15" height="15" rx="1.500" fill="#4b53bc" /><path d="M4 11h7M7.500 11v8" stroke="#fff" strokeWidth="1.900" />
      </Ic>
    ),
  },
  { name: "ChatGPT", icon: <span className="flex h-[30px] w-[30px] items-center justify-center bg-[#74a89b] text-white"><SiOpenai className="h-[23px] w-[23px]" /></span> },
  {
    name: "Anaconda",
    icon: (
      <Ic className="h-[30px] w-[30px]" box="0 0 30 30">
        <path d="M15 2.500a12.500 12.500 0 010 25" stroke="#43b02a" strokeWidth="4.500" />
        <path d="M15 27.500a12.500 12.500 0 010-25" stroke="#43b02a" strokeWidth="3.500" strokeDasharray="3 1.300" />
        <path d="M13 29a14 14 0 010-28" stroke="#43b02a" strokeWidth="1.500" strokeDasharray="2 1" />
      </Ic>
    ),
  },
  {
    name: "Notepad",
    icon: (
      <Ic className="h-[30px] w-[30px]" box="0 0 30 30">
        <path d="M4 3h22v24H4z" fill="#45c2e4" /><path d="M4 26h22v1.500H4z" fill="#e8f6fb" /><path d="M4 27.500h22V30H4z" fill="#a3541b" />
        <path d="M7.500 0v4M11.300 0v4M15 0v4M18.800 0v4M22.500 0v4" stroke="#0c5f86" strokeWidth="2.200" />
        <path d="M8 9.500h14M8 14.500h14M8 19.500h14" stroke="#0c5f86" strokeWidth="1.800" />
      </Ic>
    ),
  },
  {
    name: "MySQL Workbench",
    icon: (
      <span className="flex h-[30px] w-[30px] items-center justify-center rounded-sm border border-[#8fb5c9] bg-[#25608a]">
        <Ic className="h-7 w-7" box="0 0 28 28">
          <path d="M4 3c5-1 9 1 12 6 2 4 3 8 6 11l3 3-5-1M4 3c-1 3 2 6 2 9-1 4 0 6 2 9l2-3c4 2 8 2 12 6" stroke="#e6f1f7" strokeWidth="1.200" />
          <path d="M19 4l3 3 4-1-2 4-3-1z" fill="#e6f1f7" />
        </Ic>
      </span>
    ),
  },
  {
    name: "Power BI Desktop",
    active: true,
    icon: <Ic className="h-[30px] w-[30px]" box="0 0 30 30"><path d="M16 0h9q1 0 1 1v28q0 1-1 1h-9z" fill="#d99a0f" /><path d="M10 7.500h9q1 0 1 1V30H10z" fill="#eebd2e" /><path d="M4 15h9q1 0 1 1v14H5q-1 0-1-1z" fill="#f8df63" /></Ic>,
  },
  {
    name: "Disk tool",
    icon: (
      <Ic className="h-7 w-7" box="0 0 30 30">
        <path d="M1 18l12-4 14 5v4l-13 5L1 22z" fill="#d9d9d9" /><path d="M1 18l13 4.500V28L1 22.500z" fill="#3a3a3a" />
        <path d="M2 6l5-1 16 5v6l-9 2-9-5z" fill="#c99b4a" /><path d="M2 6l5-1 16 5-8 2z" fill="#efcf8a" />
      </Ic>
    ),
  },
];

function Taskbar() {
  return (
    <nav className="flex h-[61px] items-center border-t-2 border-[#111] bg-linear-[90deg,#d3ecb8_0%,#d6edba_22%,#d8e6c0_32%,#e4e6b4_41%,#e1efa4_47%,#eeebae_51%,#f5e7cc_55%,#faebdd_60%,#eeeef0_66%,#e2f0ee_70%,#c6f1e8_74%,#d0f5f5_84%,#c3f0ee_92%,#c0efec_100%] pb-0.5 text-sm leading-5 text-[#222]">
      <button className="flex items-center pl-[22px] text-left">
        <WeatherIcon />
        <span className="ml-1.5">25°C<br /><span className="text-[#5a5a5a]">Light rain</span></span>
      </button>
      <div className="ml-auto flex">
        {taskIcons.map(({ name, icon, active, open }) => (
          <button key={name} aria-label={name} className={"relative mx-[3px] flex h-12 w-[49px] items-center justify-center rounded-md " + (active ? "bg-white/60" : "")}>
            {icon}
            {active && <span className="absolute bottom-0 h-1 w-5 rounded-full bg-[#23808f]" />}
            {open && <span className="absolute bottom-0 h-1 w-2 rounded-full bg-[#7d8568]" />}
          </button>
        ))}
      </div>
      <div className="ml-[84px] flex items-center">
        <button aria-label="Show hidden icons"><ChevronUp className="h-5 w-5" strokeWidth={1.800} /></button>
        <button aria-label="Touch keyboard" className="ml-5">
          <Ic className="h-[18px] w-5" box="0 0 20 18"><rect x="1" y="2" width="18" height="14" rx="2" stroke="#222" strokeWidth="1.400" /><path d="M4 6h12M4 9h12" stroke="#222" strokeWidth="1.500" strokeDasharray="1.500 1.500" /><path d="M5.500 12.500h9" stroke="#222" strokeWidth="1.400" /></Ic>
        </button>
        <button className="ml-[23px] text-center">ENG<br />IN</button>
        <button aria-label="Network, volume and battery" className="ml-[22px] flex items-center gap-2.5">
          <Wifi className="h-5 w-5" strokeWidth={1.700} />
          <Volume2 className="h-5 w-5" strokeWidth={1.500} />
          <Ic className="h-5 w-5" box="0 0 20 20"><rect x="2" y="5.500" width="15" height="10" rx="2" stroke="#222" strokeWidth="1.500" /><path d="M18.500 8.500v4" stroke="#222" strokeWidth="2" /><path d="M8 8h7v5.500H5z" fill="#222" /><path d="M6.500 1L1 9h3l-1.500 5L8 7H5z" fill="#222" /></Ic>
        </button>
        <button className="ml-[26px] text-right whitespace-nowrap">22:35<br />16-10-2024</button>
        <button aria-label="Notifications" className="mr-[26px] ml-2.5">
          <Ic className="h-5 w-[18px]" box="0 0 18 20"><path d="M9 0c4 0 6 3 6 6.500V11l2 4H1l2-4V6.500C3 3 5 0 9 0zM6 16.500h6a3 3 0 01-6 0z" fill="#0f5560" /></Ic>
        </button>
      </div>
    </nav>
  );
}

export default function App() {
  return (
    <div className="flex min-h-screen flex-col bg-white font-['Noto_Sans',sans-serif]">
      <TitleBar />
      <MenuBar />
      <Ribbon />
      <main className="flex flex-1">
        <Rail />
        <div className="flex min-w-0 flex-1 flex-col">
          <div className="flex flex-1">
            <Canvas />
            <Filters />
          </div>
          <PageTabs />
        </div>
        <SidePane title="Visualizations" width="w-11" />
        <SidePane title="Data" width="w-[43px]" />
      </main>
      <StatusBar />
      <Taskbar />
    </div>
  );
}
